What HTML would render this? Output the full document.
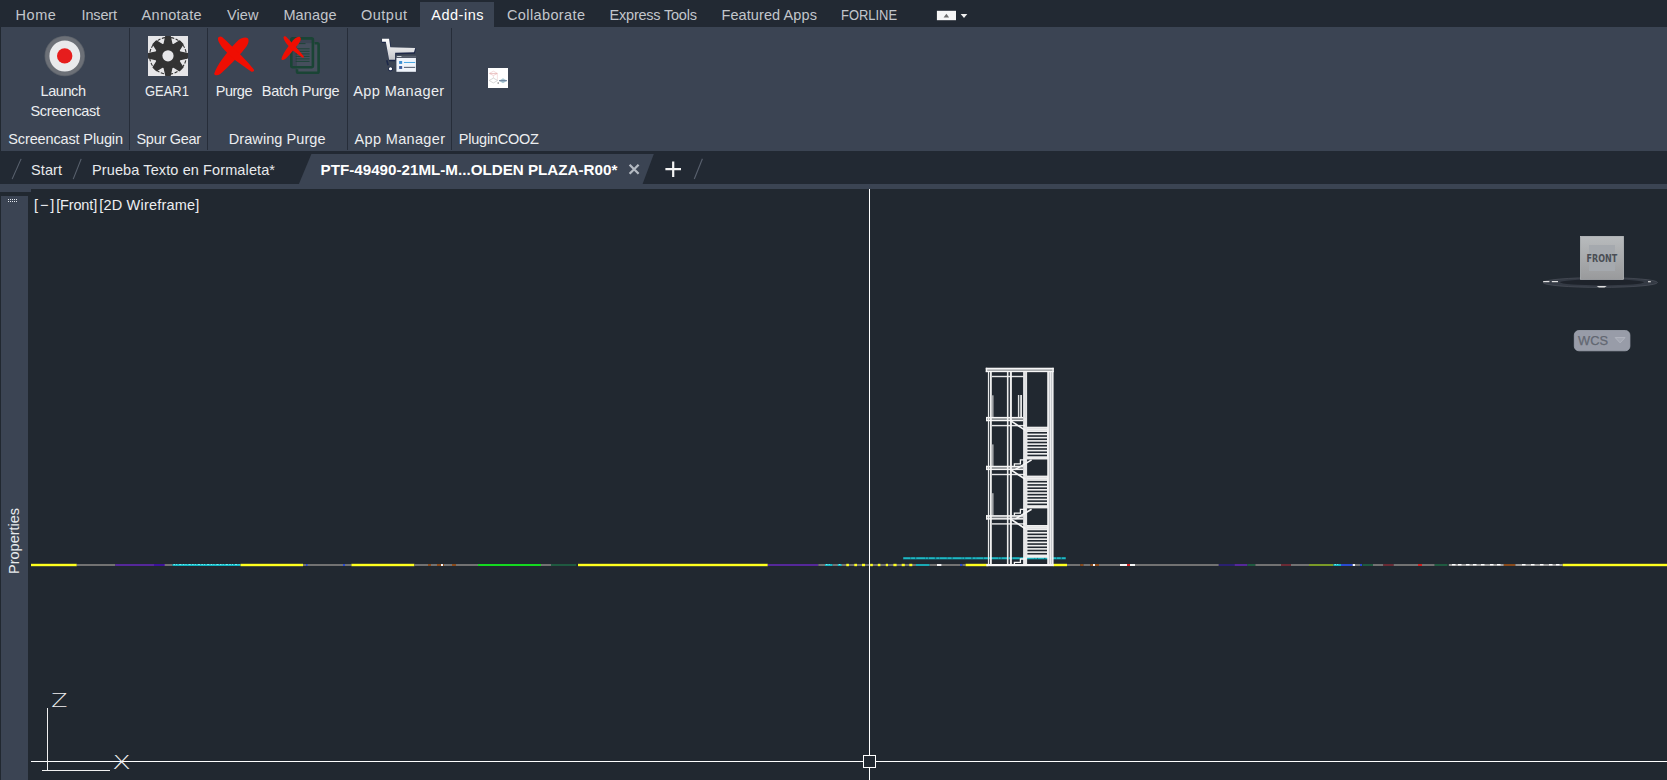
<!DOCTYPE html>
<html lang="en"><head><meta charset="utf-8"><title>AutoCAD - Add-ins</title>
<style>
html,body{margin:0;padding:0;background:#212830;}
body{width:1667px;height:780px;overflow:hidden;position:relative;font-family:"Liberation Sans",sans-serif;}
.abs{position:absolute;}
.tx{position:absolute;white-space:nowrap;line-height:20px;height:20px;}
#menubar{left:0;top:0;width:1667px;height:27px;background:#222933;}
#acttab{left:420px;top:2px;width:74px;height:25px;background:#3b4453;}
#ribbon{left:1px;top:27px;width:1666px;height:124px;background:#3b4453;}
#tabbar{left:0;top:151px;width:1667px;height:33px;background:#222933;}
#strip{left:0;top:184px;width:1667px;height:5px;background:#3b4453;}
#strip2{left:0;top:189px;width:31px;height:3px;background:#3b4453;}
#palette{left:1px;top:196px;width:27px;height:584px;background:#3b4453;}
.sep{position:absolute;top:28px;width:1px;height:122px;background:#262d39;}
</style></head><body>
<div id="menubar" class="abs"></div><div id="acttab" class="abs"></div>
<div id="ribbon" class="abs"></div>
<div class="sep" style="left:129px"></div><div class="sep" style="left:207px"></div><div class="sep" style="left:347px"></div><div class="sep" style="left:451px"></div>
<div id="tabbar" class="abs"></div><div id="strip" class="abs"></div><div id="strip2" class="abs"></div>
<div id="palette" class="abs"></div>
<svg class="abs" style="left:0;top:0" width="1667" height="780" viewBox="0 0 1667 780">
<rect x="936.9" y="10.8" width="19.1" height="9.4" fill="#f6f6f6"/>
<path d="M943.6 17.6 L946.4 13.8 L949.1 17.6 Z" fill="#6e6e6e"/>
<path d="M960.7 13.9 L967.3 13.9 L964 17.9 Z" fill="#f0f0f0"/>
<circle cx="64.8" cy="56" r="20.3" fill="#5a6069"/>
<circle cx="64.8" cy="56" r="19.5" fill="#6c7077"/>
<circle cx="64.8" cy="56" r="15.4" fill="#e9eaec"/>
<circle cx="64.7" cy="55.9" r="7.7" fill="#e61d1d"/>
<rect x="148" y="36" width="40" height="40" fill="#e6e6e8"/>
<circle cx="168" cy="55.8" r="18.4" fill="none" stroke="#333" stroke-width="1.1" stroke-dasharray="3.2 1.5"/>
<clipPath id="gc"><rect x="148" y="36" width="40" height="40"/></clipPath>
<g fill="#333" clip-path="url(#gc)">
<circle cx="168" cy="55.8" r="12.9"/>
<path transform="rotate(0 168 55.8)" stroke="#333" stroke-width="1.5" stroke-linejoin="round" d="M164.1 44.6 L166.1 35.4 L169.9 35.4 L171.9 44.6 Z"/>
<path transform="rotate(45 168 55.8)" stroke="#333" stroke-width="1.5" stroke-linejoin="round" d="M164.0 44.6 L165.7 37.2 L170.3 37.2 L172.0 44.6 Z"/>
<path transform="rotate(90 168 55.8)" stroke="#333" stroke-width="1.5" stroke-linejoin="round" d="M164.1 44.6 L166.1 35.4 L169.9 35.4 L171.9 44.6 Z"/>
<path transform="rotate(135 168 55.8)" stroke="#333" stroke-width="1.5" stroke-linejoin="round" d="M164.0 44.6 L165.7 37.2 L170.3 37.2 L172.0 44.6 Z"/>
<path transform="rotate(180 168 55.8)" stroke="#333" stroke-width="1.5" stroke-linejoin="round" d="M164.1 44.6 L166.1 35.4 L169.9 35.4 L171.9 44.6 Z"/>
<path transform="rotate(225 168 55.8)" stroke="#333" stroke-width="1.5" stroke-linejoin="round" d="M164.0 44.6 L165.7 37.2 L170.3 37.2 L172.0 44.6 Z"/>
<path transform="rotate(270 168 55.8)" stroke="#333" stroke-width="1.5" stroke-linejoin="round" d="M164.1 44.6 L166.1 35.4 L169.9 35.4 L171.9 44.6 Z"/>
<path transform="rotate(315 168 55.8)" stroke="#333" stroke-width="1.5" stroke-linejoin="round" d="M164.0 44.6 L165.7 37.2 L170.3 37.2 L172.0 44.6 Z"/>
</g>
<circle cx="168" cy="55.8" r="5.6" fill="#e6e6e8"/>
<g transform="translate(208 28) scale(0.0718)" fill="#f00e02">
<path d="M85 640 C120 520 250 350 400 190 C450 140 520 120 550 140 C580 165 560 220 540 250 C500 310 400 420 300 520 C250 570 200 620 170 640 C140 660 100 665 85 640 Z"/><path d="M138 150 C140 120 175 110 200 128 C250 170 380 300 450 370 C520 440 600 530 640 580 C648 600 625 615 600 605 C520 550 440 490 380 450 C320 400 250 330 215 290 C180 250 140 190 138 150 Z"/>
</g>
<rect x="297" y="43.2" width="21.6" height="29.6" fill="#ffffff" opacity="0.06"/>
<g fill="none" stroke="#1a4435" stroke-width="2.6" stroke-linejoin="round">
<path d="M297 69.2 L297 71.5 Q297 72.8 298.3 72.8 L317.3 72.8 Q318.6 72.8 318.6 71.5 L318.6 44.5 Q318.6 43.2 317.3 43.2 L314.6 43.2"/>
<rect x="291.3" y="38.4" width="21.6" height="28.8" rx="1.4"/>
</g>
<g stroke="#1a4435" stroke-width="1" opacity="0.9">
<line x1="299" y1="43.6" x2="305.5" y2="43.6"/>
<line x1="295.6" y1="48.8" x2="309.6" y2="48.8"/>
<line x1="295.6" y1="51.3" x2="309.6" y2="51.3"/>
<line x1="295.6" y1="53.9" x2="309.6" y2="53.9"/>
<line x1="295.6" y1="56.4" x2="309.6" y2="56.4"/>
<line x1="295.6" y1="58.9" x2="309.6" y2="58.9"/>
<line x1="295.6" y1="61.4" x2="309.6" y2="61.4"/>
</g>
<g transform="translate(277.9 31.0) scale(0.0405 0.0440)" fill="#f00e02">
<path d="M85 640 C120 520 250 350 400 190 C450 140 520 120 550 140 C580 165 560 220 540 250 C500 310 400 420 300 520 C250 570 200 620 170 640 C140 660 100 665 85 640 Z"/><path d="M138 150 C140 120 175 110 200 128 C250 170 380 300 450 370 C520 440 600 530 640 580 C648 600 625 615 600 605 C520 550 440 490 380 450 C320 400 250 330 215 290 C180 250 140 190 138 150 Z"/>
</g>
<defs><linearGradient id="cg" x1="0" y1="0" x2="0" y2="1"><stop offset="0" stop-color="#ffffff"/><stop offset="1" stop-color="#c4c6ca"/></linearGradient></defs>
<g transform="translate(372 28) scale(0.0718)">
<path d="M132 150 L245 150 L262 262 L610 275 L592 350 L330 358 L330 455 L235 455 L190 200 L132 200 Z" fill="#1d2848" transform="translate(4 8)"/>
<path d="M140 150 L238 150 L255 268 L602 278 L585 338 L322 346 L322 442 L238 442 L192 192 L140 192 Z" fill="url(#cg)"/>
<path d="M205 450 L225 520" stroke="#1d2848" stroke-width="22"/>
<circle cx="258" cy="572" r="34" fill="#1d2848"/>
<circle cx="258" cy="568" r="22" fill="#ffffff"/>
<rect x="326" y="380" width="298" height="250" fill="#3a4252"/>
<rect x="334" y="386" width="282" height="28" fill="#59616f"/>
<rect x="350" y="390" width="60" height="12" fill="#e8ecf2"/>
<rect x="340" y="418" width="272" height="192" fill="#eff4fb"/>
<rect x="378" y="460" width="42" height="40" fill="#3a8ed2"/>
<rect x="378" y="530" width="42" height="40" fill="#3b5c9a"/>
<rect x="445" y="473" width="156" height="14" fill="#47a6e2"/>
<rect x="445" y="541" width="156" height="14" fill="#4a5467"/>
</g>
<rect x="488" y="68" width="20" height="20" fill="#ffffff"/>
<g fill="none" stroke-width="0.6">
<path d="M489.4 73.4 L493.4 71.2 L497.4 73.4 L493.4 75.6 Z" stroke="#ecc0c0"/>
<path d="M489.6 73.6 L497.2 73.6" stroke="#dc9a9a" stroke-width="0.6"/>
<path d="M497.4 73.6 L497.4 80 M493.4 75.6 L493.4 78" stroke="#f2cccc"/>
<path d="M489.2 80.5 L493.4 78.1 L497.6 80.5 L493.4 82.9 Z" stroke="#bdbdbd"/>
</g>
<path d="M499 80.7 L503 78.2 L507 80.7 L503 83.2 Z" fill="#a8c6d2"/>
<path d="M499 80.7 L507 80.7" stroke="#5f7290" stroke-width="0.9"/>
<rect x="497.5" y="82.3" width="1.5" height="1.5" fill="#999"/>
<path d="M311.4 153.9 L653.8 153.9 L642.6 184 L298.9 184 Z" fill="#3b4453"/>
<g stroke="#59616e" stroke-width="1.1" fill="none">
<line x1="21.1" y1="158.9" x2="12.1" y2="179.1"/>
<line x1="81.2" y1="158.9" x2="73.2" y2="179.1"/>
<line x1="702.4" y1="158.8" x2="694.3" y2="179"/>
</g>
<path d="M629.6 164.8 L638.6 173.8 M638.6 164.8 L629.6 173.8" stroke="#b4bac2" stroke-width="2.3" fill="none"/>
<path d="M665.4 169.2 L681 169.2 M673.2 161.5 L673.2 177" stroke="#f4f4f4" stroke-width="2.2" fill="none"/>
<rect x="8" y="199" width="1" height="1" fill="#e4e8ee"/>
<rect x="8" y="201" width="1" height="1" fill="#e4e8ee"/>
<rect x="10" y="199" width="1" height="1" fill="#e4e8ee"/>
<rect x="10" y="201" width="1" height="1" fill="#e4e8ee"/>
<rect x="12" y="199" width="1" height="1" fill="#e4e8ee"/>
<rect x="12" y="201" width="1" height="1" fill="#e4e8ee"/>
<rect x="14" y="199" width="1" height="1" fill="#e4e8ee"/>
<rect x="14" y="201" width="1" height="1" fill="#e4e8ee"/>
<rect x="16" y="199" width="1" height="1" fill="#e4e8ee"/>
<rect x="16" y="201" width="1" height="1" fill="#e4e8ee"/>
</svg>
<svg class="abs" style="left:0;top:0" width="1667" height="780" viewBox="0 0 1667 780" shape-rendering="auto">
<rect x="31.0" y="563.8" width="45.8" height="2.4" fill="#ffff1e"/>
<rect x="76.8" y="564" width="38.6" height="2" fill="#727272"/>
<rect x="115.4" y="564" width="49.6" height="2" fill="#55289a"/>
<rect x="154.0" y="564" width="10.0" height="2" fill="#3c129a"/>
<rect x="165.0" y="564" width="7.5" height="2" fill="#727272"/>
<rect x="172.5" y="564" width="68.0" height="2" fill="#14b4c0"/>
<line x1="173.5" y1="564.5" x2="239.5" y2="564.5" stroke="#6cecf2" stroke-width="1" stroke-dasharray="1.5 1.2 1 2 2.2 1.4"/>
<rect x="240.5" y="563.8" width="62.5" height="2.4" fill="#ffff1e"/>
<rect x="303.0" y="564" width="48.4" height="2" fill="#727272"/>
<rect x="306.0" y="564" width="1.5" height="2" fill="#2a4ad0"/>
<rect x="343.0" y="564" width="2.0" height="2" fill="#2a4ad0"/>
<rect x="351.4" y="563.8" width="63.0" height="2.4" fill="#ffff1e"/>
<rect x="414.4" y="564" width="63.6" height="2" fill="#727272"/>
<rect x="428.0" y="564" width="3.0" height="2" fill="#8a4a1a"/>
<rect x="437.0" y="564" width="7.0" height="2" fill="#8a4a1a"/>
<rect x="452.0" y="564" width="4.0" height="2" fill="#8a4a1a"/>
<rect x="441.0" y="564" width="2.0" height="2" fill="#f4f4f4"/>
<rect x="478.0" y="564" width="63.0" height="2" fill="#14d820"/>
<rect x="541.0" y="564" width="10.0" height="2" fill="#727272"/>
<rect x="551.0" y="564" width="25.3" height="2" fill="#1f5a40"/>
<rect x="578.0" y="563.8" width="189.8" height="2.4" fill="#ffff1e"/>
<rect x="767.8" y="564" width="50.5" height="2" fill="#55289a"/>
<rect x="818.3" y="564" width="6.7" height="2" fill="#727272"/>
<rect x="825.0" y="564" width="7.7" height="2" fill="#14b4c0"/>
<line x1="826.0" y1="564.5" x2="831.7" y2="564.5" stroke="#6cecf2" stroke-width="1" stroke-dasharray="1.5 1.2 1 2 2.2 1.4"/>
<rect x="832.7" y="564" width="83.3" height="2" fill="#727272"/>
<rect x="837.8" y="564" width="3.8" height="2" fill="#14b4c0"/>
<line x1="838.8" y1="564.5" x2="840.6" y2="564.5" stroke="#6cecf2" stroke-width="1" stroke-dasharray="1.5 1.2 1 2 2.2 1.4"/>
<rect x="846.3" y="563.8" width="2.6" height="2.4" fill="#ffff1e"/>
<rect x="854.3" y="563.8" width="2.7" height="2.4" fill="#ffff1e"/>
<rect x="862.0" y="563.8" width="3.0" height="2.4" fill="#ffff1e"/>
<rect x="870.2" y="563.8" width="2.6" height="2.4" fill="#ffff1e"/>
<rect x="877.8" y="563.8" width="2.6" height="2.4" fill="#ffff1e"/>
<rect x="885.8" y="563.8" width="2.2" height="2.4" fill="#ffff1e"/>
<rect x="893.4" y="563.8" width="3.2" height="2.4" fill="#ffff1e"/>
<rect x="901.7" y="563.8" width="3.1" height="2.4" fill="#ffff1e"/>
<rect x="909.3" y="563.8" width="3.0" height="2.4" fill="#ffff1e"/>
<rect x="916.0" y="564" width="13.7" height="2" fill="#1aa9b4"/>
<rect x="929.7" y="564" width="7.3" height="2" fill="#727272"/>
<rect x="937.0" y="564" width="4.7" height="2" fill="#f4f4f4"/>
<rect x="941.7" y="564" width="18.3" height="2" fill="#727272"/>
<rect x="960.0" y="564" width="2.5" height="2" fill="#2a4ad0"/>
<rect x="962.5" y="564" width="3.1" height="2" fill="#727272"/>
<rect x="965.6" y="563.8" width="22.7" height="2.4" fill="#ffff1e"/>
<rect x="1053.0" y="563.8" width="14.0" height="2.4" fill="#ffff1e"/>
<rect x="1067.0" y="564" width="13.3" height="2" fill="#727272"/>
<rect x="1080.3" y="564" width="3.2" height="2" fill="#8a4a1a"/>
<rect x="1083.5" y="564" width="6.9" height="2" fill="#727272"/>
<rect x="1090.4" y="564" width="8.6" height="2" fill="#8a4a1a"/>
<rect x="1093.0" y="564" width="2.0" height="2" fill="#f4f4f4"/>
<rect x="1099.0" y="564" width="21.0" height="2" fill="#727272"/>
<rect x="1120.0" y="564" width="7.0" height="2" fill="#f4f4f4"/>
<rect x="1127.0" y="564" width="3.0" height="2" fill="#d02020"/>
<rect x="1130.0" y="564" width="5.0" height="2" fill="#f4f4f4"/>
<rect x="1135.0" y="564" width="83.8" height="2" fill="#727272"/>
<rect x="1218.8" y="564" width="15.8" height="2" fill="#2a2070"/>
<rect x="1234.6" y="564" width="12.9" height="2" fill="#55289a"/>
<rect x="1247.5" y="564" width="7.9" height="2" fill="#1f5a40"/>
<rect x="1255.4" y="564" width="25.6" height="2" fill="#727272"/>
<rect x="1281.0" y="564" width="10.0" height="2" fill="#6a2a34"/>
<rect x="1291.0" y="564" width="18.0" height="2" fill="#727272"/>
<rect x="1309.0" y="564" width="24.5" height="2" fill="#7a9a28"/>
<rect x="1333.5" y="564" width="7.5" height="2" fill="#14b4c0"/>
<line x1="1334.5" y1="564.5" x2="1340.0" y2="564.5" stroke="#6cecf2" stroke-width="1" stroke-dasharray="1.5 1.2 1 2 2.2 1.4"/>
<rect x="1341.0" y="564" width="11.7" height="2" fill="#2a4ad0"/>
<rect x="1352.7" y="564" width="2.3" height="2" fill="#f4f4f4"/>
<rect x="1355.0" y="564" width="5.0" height="2" fill="#727272"/>
<rect x="1360.0" y="564" width="2.0" height="2" fill="#2a4ad0"/>
<rect x="1362.4" y="564" width="10.6" height="2" fill="#1f5a40"/>
<rect x="1373.0" y="564" width="10.4" height="2" fill="#727272"/>
<rect x="1383.4" y="564" width="10.3" height="2" fill="#6a2a34"/>
<rect x="1393.7" y="564" width="24.3" height="2" fill="#727272"/>
<rect x="1418.0" y="564" width="4.0" height="2" fill="#d02020"/>
<rect x="1422.0" y="564" width="12.7" height="2" fill="#727272"/>
<rect x="1434.7" y="564" width="12.8" height="2" fill="#1f5a40"/>
<rect x="1448.8" y="564" width="55.0" height="2" fill="#9a9a9a"/>
<rect x="1503.8" y="564" width="11.6" height="2" fill="#8a4a1a"/>
<rect x="1515.4" y="564" width="47.3" height="2" fill="#9a9a9a"/>
<rect x="1562.7" y="563.8" width="104.3" height="2.4" fill="#ffff1e"/>
<rect x="1452" y="564" width="3.5" height="1.4" fill="#ffffff"/>
<rect x="1458" y="564" width="3.5" height="1.4" fill="#ffffff"/>
<rect x="1466" y="564" width="3.5" height="1.4" fill="#ffffff"/>
<rect x="1473" y="564" width="3.5" height="1.4" fill="#ffffff"/>
<rect x="1481" y="564" width="3.5" height="1.4" fill="#ffffff"/>
<rect x="1490" y="564" width="3.5" height="1.4" fill="#ffffff"/>
<rect x="1497" y="564" width="3.5" height="1.4" fill="#ffffff"/>
<rect x="1522" y="564" width="3.5" height="1.4" fill="#ffffff"/>
<rect x="1531" y="564" width="3.5" height="1.4" fill="#ffffff"/>
<rect x="1540" y="564" width="3.5" height="1.4" fill="#ffffff"/>
<rect x="1549" y="564" width="3.5" height="1.4" fill="#ffffff"/>
<rect x="1556" y="564" width="3.5" height="1.4" fill="#ffffff"/>
<rect x="903.1" y="557.2" width="162.7" height="2.3" fill="#0e7886"/>
<line x1="903.4" y1="558.2" x2="1065.6" y2="558.2" stroke="#27ccd6" stroke-width="1.2" stroke-dasharray="7 0.7 4 1.2 9 0.6 2 0.9 6 1.5 3 0.5"/>
<g stroke="#f6f6f6" fill="none" stroke-width="1">
<rect x="987.90" y="372.00" width="1.30" height="194.00" fill="#f6f6f6" stroke="none" opacity="0.95"/>
<rect x="990.00" y="372.00" width="1.80" height="194.00" fill="#f6f6f6" stroke="none" opacity="0.97"/>
<rect x="1006.90" y="372.00" width="1.60" height="194.00" fill="#f6f6f6" stroke="none" opacity="0.95"/>
<rect x="1009.90" y="372.00" width="2.00" height="194.00" fill="#f6f6f6" stroke="none" opacity="0.97"/>
<rect x="1023.10" y="372.00" width="4.00" height="194.00" fill="#f6f6f6" stroke="none" opacity="0.93"/>
<rect x="1024.90" y="372.00" width="0.40" height="46.00" fill="#a8acb2" stroke="none" opacity="0.50"/>
<rect x="1047.20" y="372.00" width="6.40" height="194.00" fill="#f6f6f6" stroke="none" opacity="0.96"/>
<rect x="1049.30" y="372.00" width="0.50" height="194.00" fill="#8a8e96" stroke="none" opacity="0.80"/>
<rect x="1051.20" y="372.00" width="0.50" height="194.00" fill="#8a8e96" stroke="none" opacity="0.80"/>
<rect x="985.80" y="367.80" width="67.90" height="4.30" fill="#f6f6f6" stroke="none" opacity="0.55"/>
<rect x="985.80" y="367.80" width="67.90" height="1.70" fill="#f6f6f6" stroke="none" opacity="1.00"/>
<rect x="985.80" y="370.80" width="67.90" height="1.30" fill="#f6f6f6" stroke="none" opacity="1.00"/>
<rect x="985.80" y="367.80" width="1.40" height="4.30" fill="#f6f6f6" stroke="none" opacity="1.00"/>
<rect x="1052.40" y="367.80" width="1.30" height="4.30" fill="#f6f6f6" stroke="none" opacity="1.00"/>
<rect x="991.80" y="375.80" width="31.70" height="1.40" fill="#f6f6f6" stroke="none" opacity="0.93"/>
<rect x="992.00" y="395.30" width="1.60" height="21.70" fill="#f6f6f6" stroke="none" opacity="0.60"/>
<rect x="1017.90" y="395.00" width="1.40" height="22.00" fill="#f6f6f6" stroke="none" opacity="0.90"/>
<rect x="1020.20" y="395.00" width="1.80" height="22.00" fill="#f6f6f6" stroke="none" opacity="0.90"/>
<rect x="992.00" y="444.40" width="1.60" height="21.60" fill="#f6f6f6" stroke="none" opacity="0.60"/>
<rect x="992.00" y="493.20" width="1.60" height="22.20" fill="#f6f6f6" stroke="none" opacity="0.60"/>
<rect x="986.00" y="417.00" width="37.20" height="4.10" fill="#f6f6f6" stroke="none" opacity="0.45"/>
<rect x="986.00" y="416.90" width="37.20" height="1.45" fill="#f6f6f6" stroke="none" opacity="1.00"/>
<rect x="986.00" y="419.85" width="37.20" height="1.35" fill="#f6f6f6" stroke="none" opacity="1.00"/>
<rect x="986.00" y="417.00" width="1.20" height="4.10" fill="#f6f6f6" stroke="none" opacity="1.00"/>
<rect x="991.80" y="424.90" width="33.10" height="1.40" fill="#f6f6f6" stroke="none" opacity="0.93"/>
<rect x="1027.00" y="426.70" width="21.00" height="32.80" fill="#f6f6f6" stroke="none" opacity="0.97"/>
<rect x="1027.40" y="432.00" width="19.60" height="1.60" fill="#212830" stroke="none" opacity="1.00"/>
<rect x="1027.40" y="435.24" width="19.60" height="1.60" fill="#212830" stroke="none" opacity="1.00"/>
<rect x="1027.40" y="438.47" width="19.60" height="1.60" fill="#212830" stroke="none" opacity="1.00"/>
<rect x="1027.40" y="441.71" width="19.60" height="1.60" fill="#212830" stroke="none" opacity="1.00"/>
<rect x="1027.40" y="444.94" width="19.60" height="1.60" fill="#212830" stroke="none" opacity="1.00"/>
<rect x="1027.40" y="448.18" width="19.60" height="1.60" fill="#212830" stroke="none" opacity="1.00"/>
<rect x="1027.40" y="451.41" width="19.60" height="1.60" fill="#212830" stroke="none" opacity="1.00"/>
<rect x="1027.40" y="454.65" width="19.60" height="1.60" fill="#212830" stroke="none" opacity="1.00"/>
<rect x="1027.40" y="428.45" width="19.60" height="0.30" fill="#9a9ea6" stroke="none" opacity="0.55"/>
<rect x="1027.40" y="430.40" width="19.60" height="0.30" fill="#9a9ea6" stroke="none" opacity="0.55"/>
<path d="M1010.4 420.6 L1025.4 430.4" stroke-width="1.7"/>
<rect x="986.00" y="465.90" width="37.20" height="4.10" fill="#f6f6f6" stroke="none" opacity="0.45"/>
<rect x="986.00" y="465.80" width="37.20" height="1.45" fill="#f6f6f6" stroke="none" opacity="1.00"/>
<rect x="986.00" y="468.75" width="37.20" height="1.35" fill="#f6f6f6" stroke="none" opacity="1.00"/>
<rect x="986.00" y="465.90" width="1.20" height="4.10" fill="#f6f6f6" stroke="none" opacity="1.00"/>
<rect x="991.80" y="473.80" width="33.10" height="1.40" fill="#f6f6f6" stroke="none" opacity="0.93"/>
<rect x="1027.00" y="475.60" width="21.00" height="32.80" fill="#f6f6f6" stroke="none" opacity="0.97"/>
<rect x="1027.40" y="480.90" width="19.60" height="1.60" fill="#212830" stroke="none" opacity="1.00"/>
<rect x="1027.40" y="484.13" width="19.60" height="1.60" fill="#212830" stroke="none" opacity="1.00"/>
<rect x="1027.40" y="487.37" width="19.60" height="1.60" fill="#212830" stroke="none" opacity="1.00"/>
<rect x="1027.40" y="490.61" width="19.60" height="1.60" fill="#212830" stroke="none" opacity="1.00"/>
<rect x="1027.40" y="493.84" width="19.60" height="1.60" fill="#212830" stroke="none" opacity="1.00"/>
<rect x="1027.40" y="497.08" width="19.60" height="1.60" fill="#212830" stroke="none" opacity="1.00"/>
<rect x="1027.40" y="500.31" width="19.60" height="1.60" fill="#212830" stroke="none" opacity="1.00"/>
<rect x="1027.40" y="503.55" width="19.60" height="1.60" fill="#212830" stroke="none" opacity="1.00"/>
<rect x="1027.40" y="477.35" width="19.60" height="0.30" fill="#9a9ea6" stroke="none" opacity="0.55"/>
<rect x="1027.40" y="479.30" width="19.60" height="0.30" fill="#9a9ea6" stroke="none" opacity="0.55"/>
<path d="M1010.4 469.5 L1025.4 479.3" stroke-width="1.7"/>
<rect x="986.00" y="515.30" width="37.20" height="4.10" fill="#f6f6f6" stroke="none" opacity="0.45"/>
<rect x="986.00" y="515.20" width="37.20" height="1.45" fill="#f6f6f6" stroke="none" opacity="1.00"/>
<rect x="986.00" y="518.15" width="37.20" height="1.35" fill="#f6f6f6" stroke="none" opacity="1.00"/>
<rect x="986.00" y="515.30" width="1.20" height="4.10" fill="#f6f6f6" stroke="none" opacity="1.00"/>
<rect x="991.80" y="523.20" width="33.10" height="1.40" fill="#f6f6f6" stroke="none" opacity="0.93"/>
<rect x="1027.00" y="525.00" width="21.00" height="32.80" fill="#f6f6f6" stroke="none" opacity="0.97"/>
<rect x="1027.40" y="530.30" width="19.60" height="1.60" fill="#212830" stroke="none" opacity="1.00"/>
<rect x="1027.40" y="533.53" width="19.60" height="1.60" fill="#212830" stroke="none" opacity="1.00"/>
<rect x="1027.40" y="536.77" width="19.60" height="1.60" fill="#212830" stroke="none" opacity="1.00"/>
<rect x="1027.40" y="540.00" width="19.60" height="1.60" fill="#212830" stroke="none" opacity="1.00"/>
<rect x="1027.40" y="543.24" width="19.60" height="1.60" fill="#212830" stroke="none" opacity="1.00"/>
<rect x="1027.40" y="546.48" width="19.60" height="1.60" fill="#212830" stroke="none" opacity="1.00"/>
<rect x="1027.40" y="549.71" width="19.60" height="1.60" fill="#212830" stroke="none" opacity="1.00"/>
<rect x="1027.40" y="552.95" width="19.60" height="1.60" fill="#212830" stroke="none" opacity="1.00"/>
<rect x="1027.40" y="526.75" width="19.60" height="0.30" fill="#9a9ea6" stroke="none" opacity="0.55"/>
<rect x="1027.40" y="528.70" width="19.60" height="0.30" fill="#9a9ea6" stroke="none" opacity="0.55"/>
<path d="M1010.4 518.9 L1025.4 528.7" stroke-width="1.7"/>
<path d="M1031.6 459.9 L1015.4 469.5" stroke-width="1.6"/>
<path d="M1026 459.9 L1020.4 459.9 L1020.4 463.8 L1014.4 463.8 L1014.4 466.2" stroke-width="1.3"/>
<path d="M1031.6 509.3 L1015.4 518.9" stroke-width="1.6"/>
<path d="M1026 509.3 L1020.4 509.3 L1020.4 513.2 L1014.4 513.2 L1014.4 515.6" stroke-width="1.3"/>
<path d="M1014.4 564 L1014.4 562.3 L1020.4 562.3 L1020.4 559 L1025.6 559" stroke-width="1.3"/>
<rect x="986.30" y="564.00" width="67.30" height="2.20" fill="#f6f6f6" stroke="none" opacity="1.00"/>
</g>
<g fill="#ffffff">
<rect x="869" y="189" width="1" height="566"/>
<rect x="869" y="768" width="1" height="12"/>
<rect x="31" y="761" width="832" height="1"/>
<rect x="876" y="761" width="791" height="1"/>
</g>
<rect x="863.5" y="755.5" width="12" height="12" fill="none" stroke="#ffffff" stroke-width="1"/>
<g fill="#f0f0f0"><rect x="47" y="708" width="1" height="63"/><rect x="42" y="770" width="68" height="1"/></g>
<text x="51.2" y="707" font-family="'DejaVu Sans',sans-serif" font-weight="200" font-size="19.2" fill="#f0f0f0" textLength="16.2" lengthAdjust="spacingAndGlyphs">Z</text>
<text x="112.2" y="769.0" font-family="'DejaVu Sans',sans-serif" font-weight="200" font-size="18.8" fill="#f0f0f0" textLength="18.6" lengthAdjust="spacingAndGlyphs">X</text>
<defs><linearGradient id="vc" x1="0" y1="0" x2="0" y2="1"><stop offset="0" stop-color="#b8bbbd"/><stop offset="1" stop-color="#999a9c"/></linearGradient>
<radialGradient id="ve" cx="0.5" cy="0.5" r="0.5"><stop offset="0" stop-color="#15191f"/><stop offset="0.8" stop-color="#1b2028"/><stop offset="1" stop-color="#2c323b"/></radialGradient></defs>
<ellipse cx="1600.3" cy="282.5" rx="57.2" ry="4.9" fill="#343a44" stroke="#474d57" stroke-width="0.8"/>
<ellipse cx="1602" cy="282.3" rx="42" ry="3" fill="#1e232b"/>
<rect x="1543.2" y="281" width="6.2" height="1.2" fill="#e0e0e0"/>
<rect x="1551.8" y="281" width="6.2" height="1.2" fill="#e0e0e0"/>
<rect x="1648" y="281.1" width="2.8" height="1.2" fill="#d8d8d8"/>
<path d="M1596.6 286 L1606.8 286 L1604.5 287.5 L1598.9 287.5 Z" fill="#dcdcdc"/>
<rect x="1580.4" y="236.3" width="43.2" height="43" fill="url(#vc)" stroke="#c6c8ca" stroke-width="0.6"/>
<rect x="1589" y="245" width="26" height="26" fill="#a5a9ae"/>
<text x="1586.6" y="262.4" font-family="'DejaVu Sans Condensed','DejaVu Sans',sans-serif" font-weight="700" font-size="10.6" fill="#4a4e55" textLength="30.6" lengthAdjust="spacingAndGlyphs">FRONT</text>
<rect x="1574.3" y="330.5" width="55.6" height="20.3" rx="4.6" fill="#989ca8" stroke="#a0a4b0" stroke-width="0.8"/>
<text x="1578" y="345.3" font-family="'Liberation Sans',sans-serif" font-size="12.8" fill="#626772" stroke="#626772" stroke-width="0.25" textLength="30" lengthAdjust="spacingAndGlyphs">WCS</text>
<path d="M1615.2 337.6 L1625 337.6 L1620.1 342.8 Z" fill="#a2a6b2" stroke="#b4b8c2" stroke-width="0.9"/>
</svg>
<span id="t0" class="tx" style="left:15.60px;top:4.78px;font-size:14.5px;font-weight:400;color:#c2c6cc;letter-spacing:0.504px;">Home</span>
<span id="t1" class="tx" style="left:81.60px;top:4.78px;font-size:14.5px;font-weight:400;color:#c2c6cc;letter-spacing:-0.173px;">Insert</span>
<span id="t2" class="tx" style="left:141.60px;top:4.78px;font-size:14.5px;font-weight:400;color:#c2c6cc;letter-spacing:0.277px;">Annotate</span>
<span id="t3" class="tx" style="left:227.00px;top:4.78px;font-size:14.5px;font-weight:400;color:#c2c6cc;letter-spacing:0.109px;">View</span>
<span id="t4" class="tx" style="left:283.40px;top:4.78px;font-size:14.5px;font-weight:400;color:#c2c6cc;letter-spacing:0.139px;">Manage</span>
<span id="t5" class="tx" style="left:361.00px;top:4.78px;font-size:14.5px;font-weight:400;color:#c2c6cc;letter-spacing:0.494px;">Output</span>
<span id="t6" class="tx" style="left:431.30px;top:4.78px;font-size:14.5px;font-weight:400;color:#ffffff;letter-spacing:0.505px;">Add-ins</span>
<span id="t7" class="tx" style="left:507.00px;top:4.78px;font-size:14.5px;font-weight:400;color:#c2c6cc;letter-spacing:0.383px;">Collaborate</span>
<span id="t8" class="tx" style="left:609.60px;top:4.78px;font-size:14.5px;font-weight:400;color:#c2c6cc;letter-spacing:-0.225px;">Express Tools</span>
<span id="t9" class="tx" style="left:721.50px;top:4.78px;font-size:14.5px;font-weight:400;color:#c2c6cc;letter-spacing:0.089px;">Featured Apps</span>
<span id="t10" class="tx" style="left:841.40px;top:4.78px;font-size:14.5px;font-weight:400;color:#c2c6cc;letter-spacing:0.000px;display:inline-block;transform-origin:0 0;transform:scaleX(0.8927);">FORLINE</span>
<span id="t11" class="tx" style="left:40.50px;top:80.53px;font-size:14.5px;font-weight:400;color:#eceef0;letter-spacing:-0.416px;">Launch</span>
<span id="t12" class="tx" style="left:30.50px;top:100.78px;font-size:14.5px;font-weight:400;color:#eceef0;letter-spacing:-0.339px;">Screencast</span>
<span id="t13" class="tx" style="left:144.70px;top:80.53px;font-size:14.5px;font-weight:400;color:#eceef0;letter-spacing:0.000px;display:inline-block;transform-origin:0 0;transform:scaleX(0.8928);">GEAR1</span>
<span id="t14" class="tx" style="left:215.80px;top:80.53px;font-size:14.5px;font-weight:400;color:#eceef0;letter-spacing:-0.501px;">Purge</span>
<span id="t15" class="tx" style="left:261.70px;top:80.53px;font-size:14.5px;font-weight:400;color:#eceef0;letter-spacing:-0.181px;">Batch Purge</span>
<span id="t16" class="tx" style="left:353.30px;top:80.53px;font-size:14.5px;font-weight:400;color:#eceef0;letter-spacing:0.384px;">App Manager</span>
<span id="t17" class="tx" style="left:8.30px;top:129.18px;font-size:14.5px;font-weight:400;color:#eceef0;letter-spacing:-0.136px;">Screencast Plugin</span>
<span id="t18" class="tx" style="left:136.50px;top:129.18px;font-size:14.5px;font-weight:400;color:#eceef0;letter-spacing:-0.301px;">Spur Gear</span>
<span id="t19" class="tx" style="left:228.80px;top:129.18px;font-size:14.5px;font-weight:400;color:#eceef0;letter-spacing:0.065px;">Drawing Purge</span>
<span id="t20" class="tx" style="left:354.50px;top:129.18px;font-size:14.5px;font-weight:400;color:#eceef0;letter-spacing:0.344px;">App Manager</span>
<span id="t21" class="tx" style="left:458.80px;top:129.18px;font-size:14.5px;font-weight:400;color:#eceef0;letter-spacing:-0.234px;">PluginCOOZ</span>
<span id="t22" class="tx" style="left:31.00px;top:159.98px;font-size:14.5px;font-weight:400;color:#e8eaec;letter-spacing:0.094px;">Start</span>
<span id="t23" class="tx" style="left:92.00px;top:159.98px;font-size:14.5px;font-weight:400;color:#e8eaec;letter-spacing:0.109px;">Prueba Texto en Formaleta*</span>
<span id="t24" class="tx" style="left:320.60px;top:159.73px;font-size:15.2px;font-weight:700;color:#ffffff;letter-spacing:-0.010px;">PTF-49490-21ML-M...OLDEN PLAZA-R00*</span>
<span id="t25" class="tx" style="left:34.00px;top:195.28px;font-size:14.5px;font-weight:400;color:#eceef0;letter-spacing:1.934px;">[−]</span>
<span id="t26" class="tx" style="left:56.20px;top:195.28px;font-size:14.5px;font-weight:400;color:#eceef0;letter-spacing:-0.151px;">[Front]</span>
<span id="t27" class="tx" style="left:99.20px;top:195.28px;font-size:14.5px;font-weight:400;color:#eceef0;letter-spacing:0.208px;">[2D Wireframe]</span>
<div id="props" style="position:absolute;left:0;top:508px;width:28px;height:66px;"><span id="ptxt" style="position:absolute;left:3.6px;top:65.6px;transform-origin:0 0;transform:rotate(-90deg);white-space:nowrap;font-size:14.5px;line-height:20px;color:#e8eaec;letter-spacing:0px;">Properties</span></div>
</body></html>
